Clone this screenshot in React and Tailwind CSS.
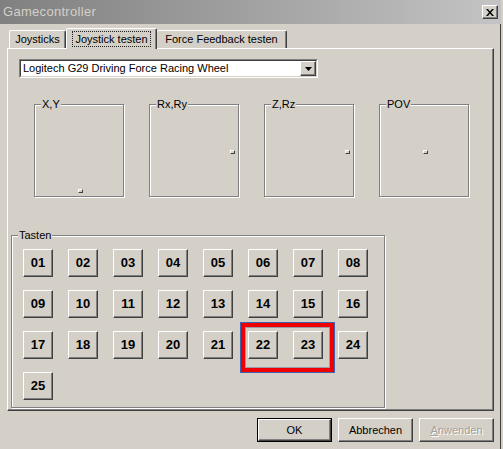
import React from 'react';

const font = { fontFamily: '"Liberation Sans", Arial, sans-serif' };

const raised =
  'border border-t-white border-l-white border-r-[#404040] border-b-[#404040] shadow-[inset_-1px_-1px_0_#808080]';
const etched =
  'border border-[#808080] shadow-[1px_1px_0_#fff,inset_1px_1px_0_#fff]';

const Dot = ({ className }) => (
  <div className={`absolute w-[5px] h-[4px] bg-[#d4d0c8] border-t border-l border-t-white border-l-white border-b border-r border-b-[#404040] border-r-[#404040] ${className}`} />
);

const AxisBox = ({ label, children }) => (
  <div className={`relative w-[90px] h-[93px] ${etched}`}>
    <span className="absolute -top-[8px] left-[6px] px-px bg-[#d4d0c8] text-[11px] leading-[14px] text-black">
      {label}
    </span>
    {children}
  </div>
);

const keys = Array.from({ length: 25 }, (_, i) => String(i + 1).padStart(2, '0'));

export default function App() {
  return (
    <div style={font} className="w-[503px] h-[449px] bg-[#d4d0c8] overflow-hidden relative">
      {/* title bar */}
      <div className="h-[24px] w-[501px] flex items-center justify-between pl-[3px] pr-[3px] bg-gradient-to-r from-[#808080] to-[#c4c4c4]">
        <span className="text-[13px] text-[#d4d0c8] tracking-[0.3px]">Gamecontroller</span>
        <div className={`w-[16px] h-[14px] bg-[#d4d0c8] flex items-center justify-center ${raised}`}>
          <svg width="8" height="7" viewBox="0 0 8 7">
            <path d="M0 0h2l2 2.5L6 0h2L5 3.5 8 7H6L4 4.5 2 7H0l3-3.5z" fill="#000" />
          </svg>
        </div>
      </div>
      <div className="absolute right-[2px] top-[24px] bottom-0 w-px bg-[#404040]" />

      {/* tabs */}
      <div className="flex items-end h-[24px] pt-[4px] pl-[9px] text-[11px] text-black relative z-10">
        <div className="w-[57px] h-[18px] border-t border-l border-white border-r border-r-[#404040] rounded-t-[2px] shadow-[inset_-1px_0_0_#808080] flex items-center justify-center">
          Joysticks
        </div>
        <div className="w-[91px] h-[21px] -mb-px bg-[#d4d0c8] border-t border-l border-white border-r border-r-[#404040] rounded-t-[2px] shadow-[inset_-1px_0_0_#808080] flex items-center justify-center">
          <span className="px-[2px] leading-[14px] outline outline-1 outline-dotted outline-[#202020]">Joystick testen</span>
        </div>
        <div className="w-[130px] h-[18px] border-t border-white border-r border-r-[#404040] rounded-t-[2px] shadow-[inset_-1px_0_0_#808080] flex items-center justify-center">
          Force Feedback testen
        </div>
      </div>

      {/* panel */}
      <div className={`ml-[7px] w-[487px] h-[363px] pl-[3px] pt-[10px] ${raised}`}>
        {/* combobox */}
        <div className="ml-[8px] w-[299px] h-[19px] border border-t-[#808080] border-l-[#808080] border-r-white border-b-white">
          <div className="h-full flex items-center bg-white border border-t-[#404040] border-l-[#404040] border-r-[#d4d0c8] border-b-[#d4d0c8]">
            <span className="flex-1 pl-[2px] text-[11px] text-black">Logitech G29 Driving Force Racing Wheel</span>
            <div className={`w-[16px] h-[15px] bg-[#d4d0c8] flex items-center justify-center ${raised}`}>
              <svg width="7" height="4" viewBox="0 0 7 4">
                <path d="M0 0h7L3.5 4z" fill="#000" />
              </svg>
            </div>
          </div>
        </div>

        {/* axes */}
        <div className="ml-[23px] mt-[26px] flex gap-[25px]">
          <AxisBox label="X,Y">
            <Dot className="left-[43px] top-[84px]" />
          </AxisBox>
          <AxisBox label="Rx,Ry">
            <Dot className="left-[80px] top-[45px]" />
          </AxisBox>
          <AxisBox label="Z,Rz">
            <Dot className="left-[80px] top-[45px]" />
          </AxisBox>
          <AxisBox label="POV">
            <Dot className="left-[43px] top-[45px]" />
          </AxisBox>
        </div>

        {/* buttons */}
        <div className={`relative mt-[38px] w-[374px] h-[173px] pl-[11px] pt-[13px] ${etched}`}>
          <span className="absolute -top-[8px] left-[6px] px-px bg-[#d4d0c8] text-[11px] leading-[14px] text-black">
            Tasten
          </span>
          <div className="grid grid-cols-[repeat(8,30px)] gap-x-[15px] gap-y-[13px]">
            {keys.map((k) => (
              <div
                key={k}
                className={`w-[30px] h-[28px] flex items-center justify-center text-[13px] font-bold text-black ${raised}`}
              >
                {k}
              </div>
            ))}
          </div>
          <div className="absolute left-[228px] top-[86px] w-[95px] h-[51px] border border-[#3d63b0]">
            <div className="w-full h-full border-[4px] border-[#f00000]">
              <div className="w-full h-full border border-[#9a9aa8]" />
            </div>
          </div>
        </div>
      </div>

      {/* dialog buttons */}
      <div className="mt-[7px] pr-[9px] flex justify-end gap-[6px] text-[11px]">
        <div className="w-[75px] h-[24px] border border-black">
          <div className={`h-full flex items-center justify-center text-black ${raised}`}>OK</div>
        </div>
        <div className={`w-[75px] h-[24px] flex items-center justify-center text-black ${raised}`}>Abbrechen</div>
        <div className={`w-[75px] h-[24px] flex items-center justify-center text-[#a0a0a0] [text-shadow:1px_1px_0_#fff] ${raised}`}>
          <span><span className="underline">A</span>nwenden</span>
        </div>
      </div>
    </div>
  );
}
